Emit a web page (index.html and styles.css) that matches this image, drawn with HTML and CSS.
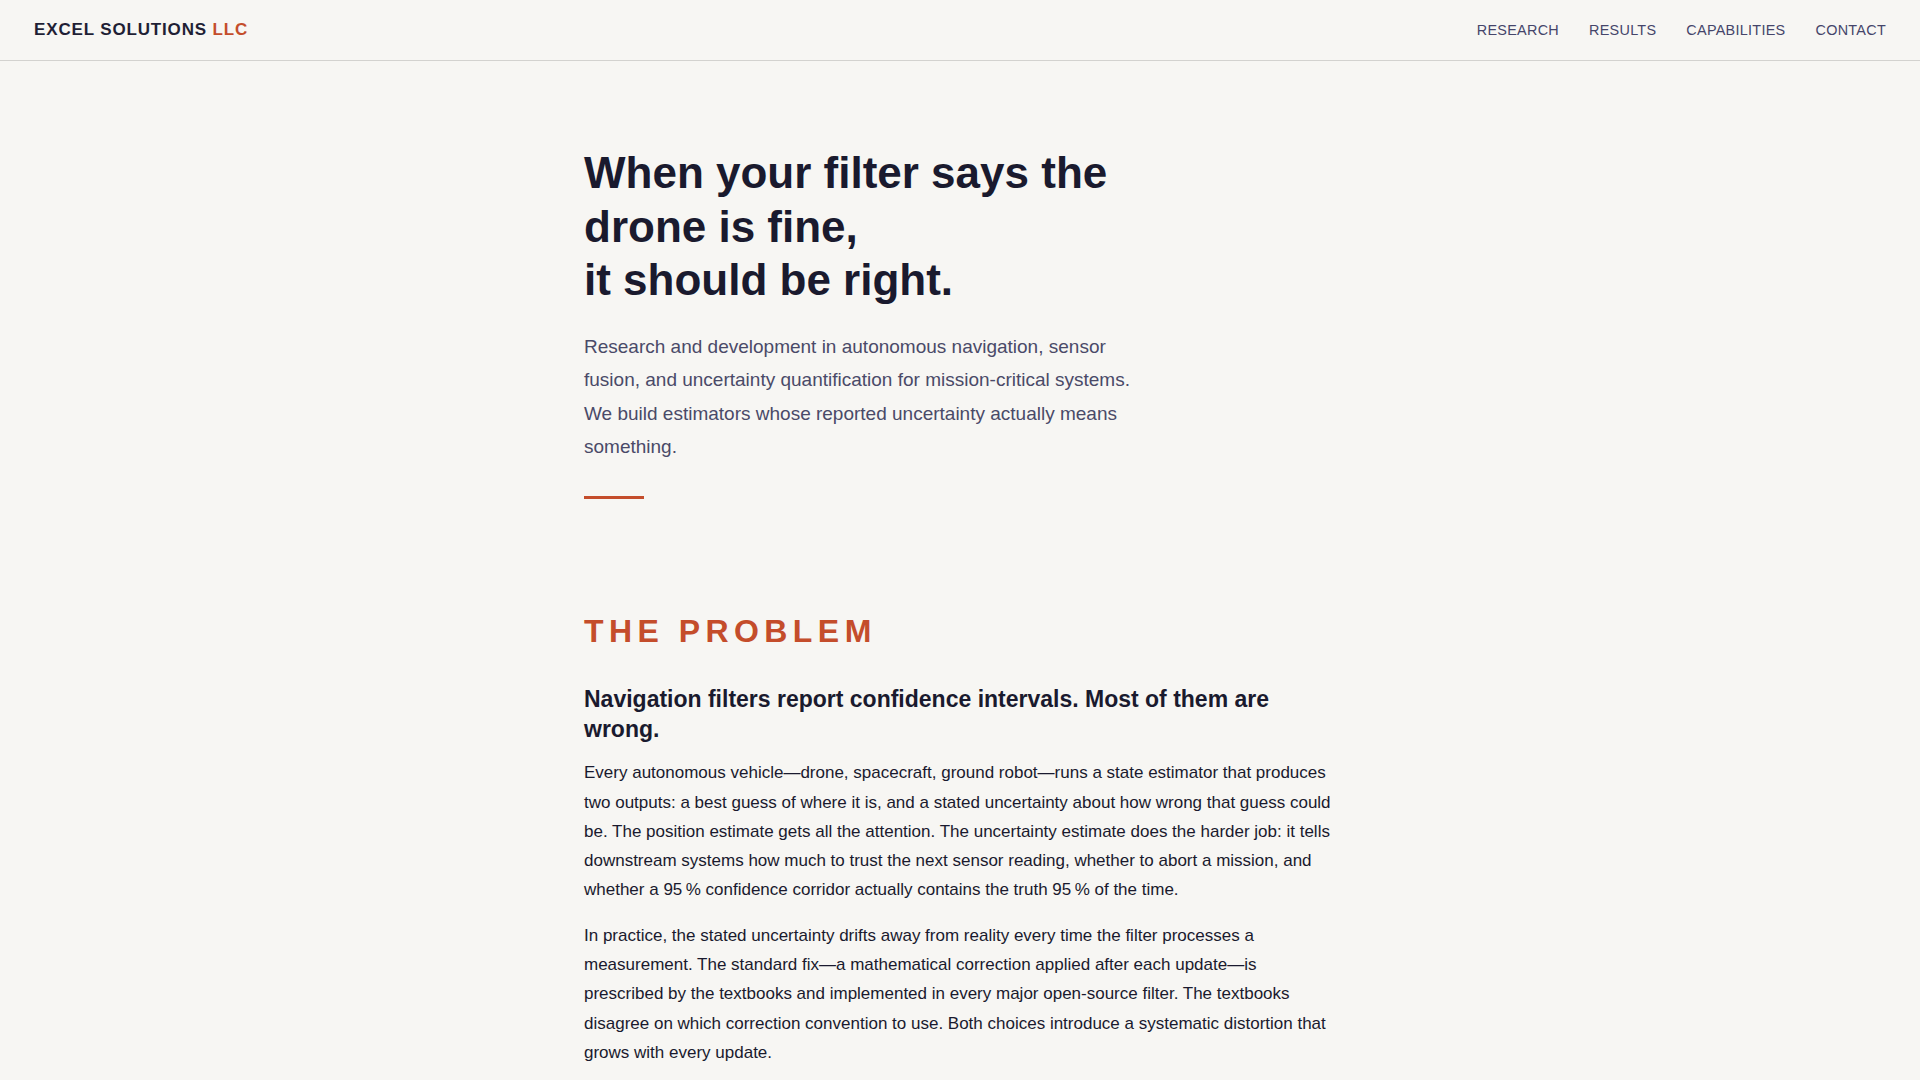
FILE: index.html
```html
<!DOCTYPE html>
<html lang="en">
<head>
<meta charset="utf-8">
<title>Excel Solutions LLC</title>
<link rel="stylesheet" href="styles.css">
</head>
<body>
<header class="site-header">
  <div class="logo">EXCEL SOLUTIONS <span class="logo-accent">LLC</span></div>
  <nav class="nav">
    <a href="#research">RESEARCH</a>
    <a href="#results">RESULTS</a>
    <a href="#capabilities">CAPABILITIES</a>
    <a href="#contact">CONTACT</a>
  </nav>
</header>
<main class="container">
  <section class="hero">
    <h1 class="hero-title">When your filter says the drone is fine,<br>it should be right.</h1>
    <p class="hero-sub">Research and development in autonomous navigation, sensor fusion, and uncertainty quantification for mission-critical systems. We build estimators whose reported uncertainty actually means something.</p>
    <div class="accent-bar"></div>
  </section>
  <section class="problem">
    <h2 class="section-label">THE PROBLEM</h2>
    <h3 class="section-title">Navigation filters report confidence intervals. Most of them are wrong.</h3>
    <p class="body-text">Every autonomous vehicle—drone, spacecraft, ground robot—runs a state estimator that produces two outputs: a best guess of where it is, and a stated uncertainty about how wrong that guess could be. The position estimate gets all the attention. The uncertainty estimate does the harder job: it tells downstream systems how much to trust the next sensor reading, whether to abort a mission, and whether a 95&#8239;% confidence corridor actually contains the truth 95&#8239;% of the time.</p>
    <p class="body-text">In practice, the stated uncertainty drifts away from reality every time the filter processes a measurement. The standard fix—a mathematical correction applied after each update—is prescribed by the textbooks and implemented in every major open-source filter. The textbooks disagree on which correction convention to use. Both choices introduce a systematic distortion that grows with every update.</p>
  </section>
</main>
</body>
</html>
```
FILE: styles.css
```css
html, body {
  margin: 0;
  padding: 0;
}
body {
  background: #f7f6f3;
  color: #1a1a2e;
  font-family: "Liberation Sans", Arial, sans-serif;
}
.site-header {
  height: 60px;
  border-bottom: 1px solid #d3d2cf;
  display: flex;
  align-items: center;
  justify-content: space-between;
  padding: 0 34px 0 34px;
}
.logo {
  font-size: 17px;
  font-weight: 700;
  letter-spacing: 0.05em;
  color: #1f1f35;
}
.logo-accent {
  color: #c44d2b;
}
.nav {
  display: flex;
  gap: 30px;
}
.nav a {
  font-size: 14.4px;
  letter-spacing: 0.02em;
  color: #45456a;
  text-decoration: none;
}
.container {
  max-width: 752px;
  margin: 0 auto;
  padding: 0 24px;
}
.hero {
  padding: 85px 0 48px;
}
.hero-title {
  font-size: 44px;
  line-height: 1.22;
  font-weight: 700;
  color: #1a1a2e;
  margin: 0 0 23px;
  max-width: 600px;
}
.hero-sub {
  font-size: 19px;
  line-height: 1.75;
  color: #4a4a68;
  margin: 0 0 33px;
  max-width: 560px;
}
.accent-bar {
  width: 60px;
  height: 3px;
  background: #c44d2b;
}
.problem {
  padding-top: 65px;
}
.section-label {
  font-size: 32px;
  line-height: 1.2;
  font-weight: 700;
  letter-spacing: 0.17em;
  color: #c44d2b;
  margin: 0 0 35px;
}
.section-title {
  font-size: 23px;
  line-height: 29.4px;
  font-weight: 700;
  color: #1a1a2e;
  margin: 0 0 14px;
}
.body-text {
  font-size: 17px;
  line-height: 29.3px;
  color: #1a1a2e;
  margin: 0 0 16px;
}
```
